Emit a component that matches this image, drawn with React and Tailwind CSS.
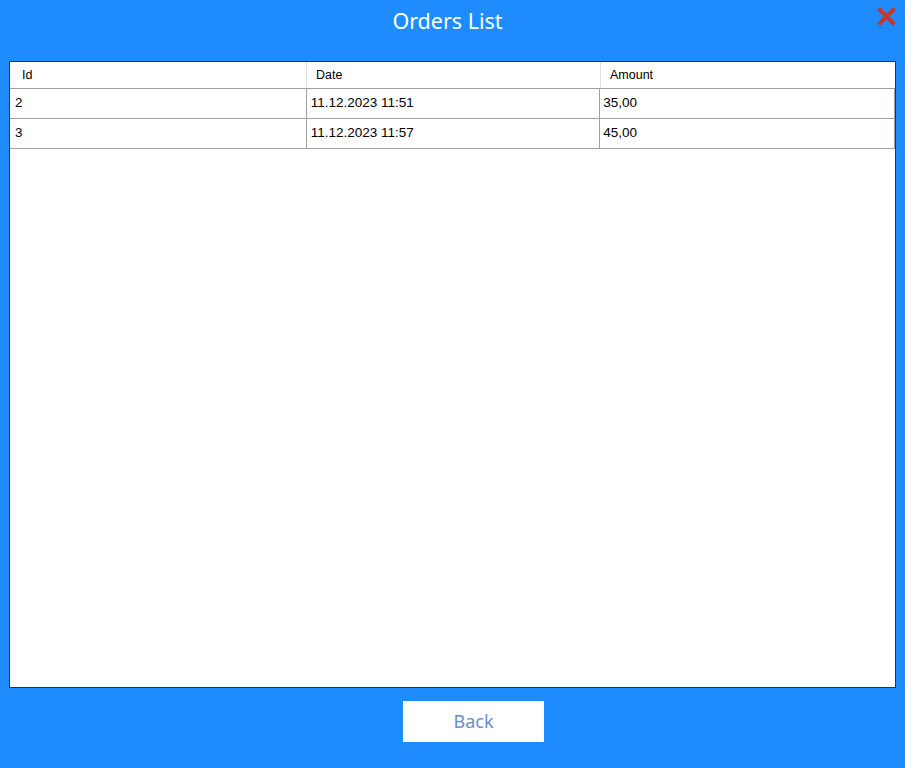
import React from "react";

const rows = [
  { id: "2", date: "11.12.2023 11:51", amount: "35,00" },
  { id: "3", date: "11.12.2023 11:57", amount: "45,00" },
];

export default function App() {
  return (
    <div className="w-[905px] h-[768px] bg-[#1e8cff] flex flex-col" style={{ fontFamily: '"Liberation Sans", Arial, sans-serif' }}>
      <div className="relative h-[61px] flex items-start justify-center">
        <div className="mt-[7px] ml-[-10px] text-white text-[21.5px] leading-[28px]" style={{ fontFamily: '"Noto Sans", "Open Sans", sans-serif' }}>Orders List</div>
        <div className="absolute right-[8px] top-[6px] w-[21px] h-[21px]">
          <svg viewBox="0 0 21 21" width="21" height="21">
            <path d="M2.5 2.5 L18.5 18.5 M18.5 2.5 L2.5 18.5" stroke="#c0392b" strokeWidth="4" strokeLinecap="butt" />
          </svg>
        </div>
      </div>
      <div className="mx-[9px] h-[627px] bg-white border border-[#1f3550] flex flex-col">
        <div className="flex h-[27px] border-b border-[#a0a0a0] text-[12.5px] text-black">
          <div className="w-[297px] pl-[12px] pt-[1px] flex items-center border-r border-[#e0e0e0]">Id</div>
          <div className="w-[294px] pl-[9px] pt-[1px] flex items-center border-r border-[#e0e0e0]">Date</div>
          <div className="flex-1 pl-[9px] pt-[1px] flex items-center">Amount</div>
        </div>
        {rows.map((r) => (
          <div key={r.id} className="flex h-[30px] border-b border-[#a0a0a0] text-[13.5px] text-black">
            <div className="w-[297px] pl-[5px] flex items-center border-r border-[#a0a0a0]">{r.id}</div>
            <div className="w-[294px] pl-[4px] flex items-center border-r border-[#a0a0a0]">{r.date}</div>
            <div className="w-[295px] pl-[3px] flex items-center border-r border-[#a0a0a0]">{r.amount}</div>
          </div>
        ))}
      </div>
      <div className="flex justify-center mt-[13px] pl-[42px]">
        <div className="w-[141px] h-[41px] bg-white flex items-center justify-center text-[18px] text-[#6b8fc4]" style={{ fontFamily: '"Noto Sans", "Open Sans", sans-serif' }}>Back</div>
      </div>
    </div>
  );
}
